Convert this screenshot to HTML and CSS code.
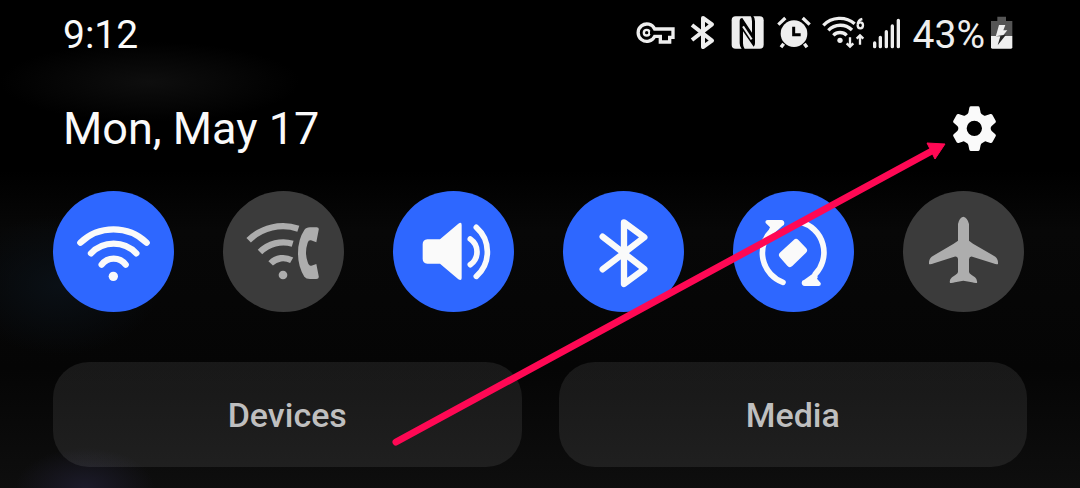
FILE: index.html
```html
<!DOCTYPE html>
<html lang="en">
<head>
<meta charset="utf-8">
<meta name="viewport" content="width=device-width, initial-scale=1">
<title>Quick settings</title>
<link rel="stylesheet" href="styles.css">
</head>
<body>
<main class="panel">
  <div class="status">
    <time class="clock">9:12</time>
    <div class="indicators">
      <svg width="42" height="46" viewBox="42 36 126 138" role="img" aria-label="VPN"><path fill="none" stroke="#eee" stroke-width="10" stroke-linejoin="miter" d="M101 87H156V112H146V126H118V109H101A26 26 0 1 1 101 87Z"/><circle cx="77" cy="98" r="12" fill="#eee"/><circle cx="77" cy="98" r="5" fill="#000"/><path d="M87 98H150" stroke="#000" stroke-width="9"/><path d="M134 98V118" stroke="#000" stroke-width="8"/></svg>
      <svg width="28" height="46" viewBox="204 36 84 138" role="img" aria-label="Bluetooth"><path fill="none" stroke="#eee" stroke-width="12" stroke-linejoin="round" d="M213 75L273 122L246 141V54L273 73L213 120"/></svg>
      <svg width="36" height="46" viewBox="324 36 108 138" role="img" aria-label="NFC"><rect x="332" y="49" width="96" height="97" rx="12" fill="#eee"/><path d="M356 64Q356 54 364 54L393 98V64Q393 54 389 48H397Q402 54 402 64V130Q402 138 398 140L366 94V130Q366 140 371 147H362Q356 140 356 130Z" fill="#000"/><path d="M366 79L392 118" stroke="#eee" stroke-width="6"/></svg>
      <svg width="34" height="46" viewBox="468 36 102 138" role="img" aria-label="Alarm"><circle cx="519" cy="101" r="40" fill="#eee"/><path d="M472 74L493 54M545 54L566 74M488 131L480 142M550 131L558 142" stroke="#eee" stroke-width="10"/><path d="M518 80V104H539" fill="none" stroke="#000" stroke-width="9"/></svg>
      <svg width="40" height="46" viewBox="36 36 120 138" role="img" aria-label="Wi-Fi 6"><g fill="none" stroke="#eee" stroke-width="10"><path d="M37 76A70 70 0 0 1 131 71M52 91A50 50 0 0 1 123 90M67 106A28 28 0 0 1 107 106"/><path d="M117 112V139M107 130L117 140L127 130M147 134V107M137 116L147 106L157 116" stroke-width="7"/><path d="M154 57Q141 60 140 74M140 76A8 9 0 1 0 156 76A8 9 0 1 0 140 76" stroke-width="7"/></g><circle cx="87" cy="121" r="8" fill="#eee"/></svg>
      <svg width="26" height="46" viewBox="192 36 78 138" role="img" aria-label="Signal"><path d="M191 129V140M208 112V140M226 95V140M244 78V140M262 61V140" stroke="#eee" stroke-width="10" stroke-linecap="round"/></svg>
      <span class="charge">43%
        <svg width="24" height="46" viewBox="540 36 72 138" role="img" aria-label="Charging"><path fill="#555" d="M562 50H588V63H607V108H543V63H562Z"/><path fill="#eee" d="M543 108H607V142Q607 146 603 146H547Q543 146 543 142Z"/><path fill="#eee" d="M567 75H586L580 91H592L576 110H557Z"/><path fill="#222" d="M557 109H571L563 136L588 104L576 106Z"/></svg>
      </span>
    </div>
  </div>
  <header class="heading">
    <h1 class="date">Mon, May 17</h1>
    <button class="settings" aria-label="Settings"><svg width="45" height="47" viewBox="156 45 135 141"><path fill="#fafafa" fill-rule="evenodd" d="M213 46H234Q238 46 239 50L242 65Q244 69 248 71L253 74Q256 75 260 73L271 69Q275 68 277 71L287 89Q289 93 286 95L275 105Q272 108 272 112Q272 117 275 120L286 130Q289 133 287 136L277 154Q275 157 271 156L260 152Q256 150 253 152L247 156Q243 158 242 162L239 176Q238 180 234 180H213Q209 180 208 176L205 162Q204 158 200 156L194 152Q191 150 187 152L176 156Q172 157 170 154L160 136Q158 133 161 130L172 120Q175 117 175 112Q175 108 172 105L161 95Q158 93 160 89L170 71Q172 68 176 69L187 73Q191 75 194 74L199 71Q203 69 205 65L208 50Q209 46 213 46ZM223 89A23 23 0 1 0 223 135A23 23 0 1 0 223 89Z"/></svg></button>
  </header>
  <div class="tiles">
    <button class="tile on" aria-label="Wi-Fi" aria-pressed="true"><svg viewBox="39 33 363 363"><path class="line" stroke-width="19" d="M121 188A144 144 0 0 1 320 188M153 220A94 94 0 0 1 289 220M185 254A45 45 0 0 1 257 254"/><circle cx="220" cy="289" r="14"/></svg></button>
    <button class="tile" aria-label="Wi-Fi calling" aria-pressed="false"><svg viewBox="39 33 363 363"><path class="line butt" stroke-width="19" d="M116 181A147 147 0 0 1 265 146M150 216A99 99 0 0 1 248 191M182 250A52 52 0 0 1 245 241"/><circle cx="219" cy="285" r="13"/><path d="M300 142H320Q328 142 326 150L319 187L303 181Q296 179 293 188Q283 218 293 246Q297 259 304 257L319 252L326 288Q328 297 319 297H300Q288 297 283 290Q264 260 264 220Q264 178 283 150Q288 142 300 142Z"/></svg></button>
    <button class="tile on" aria-label="Sound" aria-pressed="true"><svg viewBox="39 33 363 363"><path d="M142 178H180L235 131Q245 124 245 135V294Q245 304 235 298L180 251H142Q128 249 128 236V193Q128 180 142 178Z"/><path class="line" stroke-width="17" d="M271 177A47 47 0 0 1 271 254M289 142A98 98 0 0 1 289 289"/></svg></button>
    <button class="tile on" aria-label="Bluetooth" aria-pressed="true"><svg viewBox="39 33 363 363"><path class="line" stroke-width="19" d="M158 170L283 267L222 312V127L283 172L158 268"/></svg></button>
    <button class="tile on" aria-label="Auto rotate" aria-pressed="true"><svg viewBox="39 33 363 363"><path class="line" stroke-width="17" d="M189 307A94 94 0 0 1 156 151M244 127A94 94 0 0 1 286 282"/><path d="M143 120H184Q193 121 193 130Q193 136 187 138L160 162L147 149L150 142L137 129Q134 121 143 120ZM296 318H254Q245 317 245 308Q245 301 253 299L278 281L294 290L291 296L302 309Q304 317 296 318Z"/><path class="solid" stroke-width="20" d="M187 225L228 187L251 211L210 251Z"/></svg></button>
    <button class="tile" aria-label="Airplane mode" aria-pressed="false"><svg viewBox="39 33 363 363"><path d="M220 110Q232 112 237 132V182L249 191L316 230Q325 237 324 252Q320 254 309 250L247 230Q238 228 237 238V276Q237 280 246 286L255 292Q263 299 261 309Q254 310 246 307L220 302L195 307Q187 310 180 309Q177 299 186 292L195 286Q204 280 204 276V238Q203 228 193 230L132 250Q121 254 117 252Q116 237 125 230L191 191L204 182V132Q208 112 220 110Z"/></svg></button>
  </div>
  <div class="shortcuts">
    <button class="shortcut">Devices</button>
    <button class="shortcut">Media</button>
  </div>
  <svg class="pointer" viewBox="0 0 1080 488" aria-hidden="true"><path d="M396 442L930 152" stroke="#ff0854" stroke-width="7" stroke-linecap="round"/><path d="M927 143L945 144L935 159Z" fill="#ff0854" stroke="#ff0854" stroke-width="1"/></svg>
</main>
</body>
</html>
```
FILE: styles.css
```css
* { box-sizing: border-box; }
body {
  margin: 0;
  background: #000;
  color: #fafafa;
  font-family: Roboto, "Liberation Sans", sans-serif;
}
button {
  border: 0;
  padding: 0;
  font: inherit;
  color: inherit;
  background: none;
  cursor: pointer;
}
svg { display: block; overflow: visible; }
.panel {
  position: relative;
  min-height: 100vh;
  padding: 12px 53px 21px;
  overflow: hidden;
  background:
    radial-gradient(ellipse 70px 40px at 85px 488px, #1c1b2a, transparent),
    radial-gradient(ellipse 150px 40px at 150px 82px, #0e0e0e, transparent),
    radial-gradient(ellipse 100px 70px at 60px 285px, #0a1016, transparent),
    linear-gradient(#000 0, #000 170px, #070707 230px, #050505 370px, #0e0e0e 488px);
}
.status {
  display: flex;
  justify-content: space-between;
  padding: 0 13px 0 10px;
  font-size: 39px;
  line-height: 46px;
}
.indicators { display: flex; gap: 12px; color: #eee; }
.charge { display: flex; gap: 5px; }
.heading {
  display: flex;
  justify-content: space-between;
  align-items: center;
  margin-top: 44px;
  padding: 0 30px 0 10px;
}
.date {
  margin: 0;
  font-size: 45px;
  font-weight: 400;
  line-height: 54px;
}
.tiles {
  display: flex;
  justify-content: space-between;
  margin-top: 35px;
  padding-right: 3px;
}
.tile {
  width: 121px;
  height: 121px;
  border-radius: 50%;
  background: #3b3b3b;
  color: #adadad;
}
.tile.on { background: #2e67ff; color: #fafafa; }
.tile svg { width: 100%; fill: currentColor; }
.tile .line {
  fill: none;
  stroke: currentColor;
  stroke-linecap: round;
  stroke-linejoin: round;
}
.tile .butt { stroke-linecap: butt; }
.tile .solid {
  stroke: currentColor;
  stroke-linejoin: round;
}
.shortcuts {
  display: grid;
  grid-template-columns: 1fr 1fr;
  gap: 37px;
  margin-top: 50px;
}
.shortcut {
  height: 105px;
  border-radius: 36px;
  background: linear-gradient(rgba(255, 255, 255, 0.08), rgba(255, 255, 255, 0.08));
  color: #bfbfbf;
  font-size: 34px;
  font-weight: 500;
}
.pointer {
  position: absolute;
  inset: 0;
  width: 100%;
  pointer-events: none;
  fill: none;
}
```
